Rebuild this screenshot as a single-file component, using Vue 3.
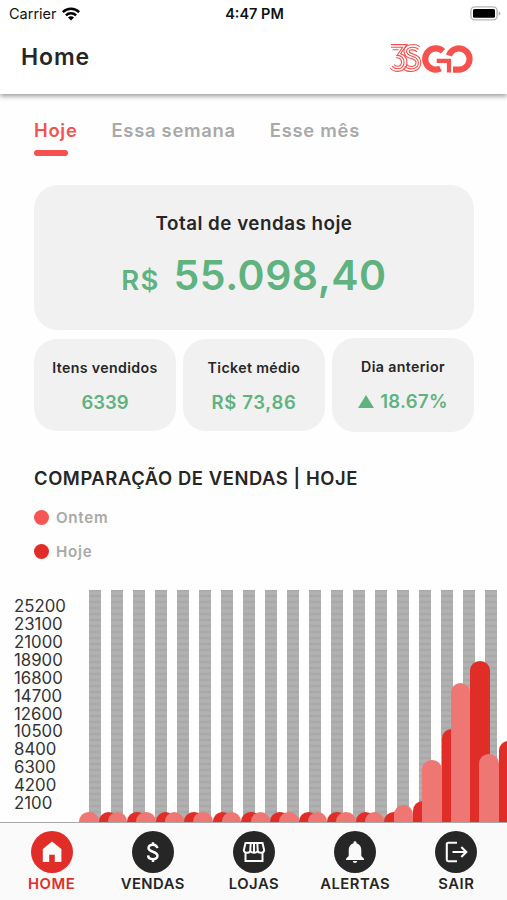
<template>
    <div class="screen">
        <header class="header">
            <div class="status">
                <div class="carrier">
                    <span>Carrier</span>
                    <svg width="18" height="14" viewBox="0 0 18 14" fill="none" stroke="#000" stroke-width="2.5">
                        <path d="M0.9 5.2a11.4 11.4 0 0 1 16.2 0" />
                        <path d="M3.9 8.4a7.2 7.2 0 0 1 10.2 0" />
                        <path d="M9 13.6L6 10.5a4.2 4.2 0 0 1 6 0z" fill="#000" stroke="none" />
                    </svg>
                </div>
                <div class="clock">4:47 PM</div>
                <svg class="battery" width="31" height="15" viewBox="0 0 31 15">
                    <rect x="0.9" y="0.9" width="26.2" height="13" rx="4" fill="#fff" stroke="#b5b5b5" stroke-width="1.4" />
                    <rect x="3" y="3" width="22" height="8.8" rx="1.6" fill="#000" />
                    <path d="M28.6 5.2q1.9 .7 1.9 2.2t-1.9 2.2z" fill="#b5b5b5" />
                </svg>
            </div>
            <div class="title-bar">
                <h1>Home</h1>
                <svg class="logo" width="84" height="32" viewBox="0 0 84 32" fill="none" stroke="#f4514f">
                    <g stroke-width="1.1">
                        <path d="M2 2.6H18L11.6 11.6C21 14 20 29.4 9 29.4C5.5 29.4 3 28.2 1.2 26" />
                        <path d="M2 5.2H13.6L8 13.4C17.5 13 17 26.8 9 26.8C6.5 26.8 4.5 26 3 24.2" />
                        <path d="M3.6 7.8H9.6M7 15.8C14 15 14 24.3 9 24.3C7.5 24.3 6 23.6 5 22.6" />
                        <path d="M31 4.6C25 .8 14.4 2.6 15 9.4C15.5 19 27 14.5 27 20.6C27 25.8 19.5 25.2 17.5 22.4" />
                        <path d="M29.6 7.2C25.5 4.2 17.5 4.8 17.6 9.2C17.9 16 29.4 12.6 29.4 20.8C29.2 28.2 20 28 15.5 24.4" />
                        <path d="M28 9.8C25.5 7.4 20 7.2 20.2 9.4C20.4 13.2 32 10.8 31.8 21C31 31.2 18 31 14 26.6" />
                    </g>
                    <g stroke-width="6.2">
                        <path d="M54 9.2A10.6 10.6 0 1 0 51.5 26.5" />
                        <path d="M47.7 18.8H60V30.6" stroke-width="4.2" />
                        <path d="M59.9 13.6A10.6 10.6 0 1 1 69.8 27.6H64" />
                    </g>
                </svg>
            </div>
        </header>

        <nav class="tabs">
            <a v-for="tab in tabs" :key="tab" :class="{ active: tab === activeTab }" @click="activeTab = tab">{{ tab }}</a>
        </nav>

        <section class="total">
            <h2>Total de vendas hoje</h2>
            <div class="amount"><span class="currency">R$</span><span class="number">55.098,40</span></div>
        </section>

        <section class="cards">
            <div v-for="card in cards" :key="card.label" class="card" :class="{ raised: card.up }">
                <h3>{{ card.label }}</h3>
                <div class="value" :class="card.kind">
                    <svg v-if="card.up" width="16" height="13" viewBox="0 0 16 13"><path d="M8 0l8 13H0z" fill="#60b27f" /></svg>
                    <span>{{ card.value }}</span>
                </div>
            </div>
        </section>

        <section class="compare">
            <h2>COMPARAÇÃO DE VENDAS | HOJE</h2>
            <div class="legend"><i class="dot yesterday"></i>Ontem</div>
            <div class="legend"><i class="dot today"></i>Hoje</div>
        </section>

        <section class="chart">
            <div class="axis">
                <div v-for="n in axis" :key="n">{{ n }}</div>
            </div>
            <div class="plot">
                <div class="stripes">
                    <i v-for="n in 19" :key="n"></i>
                </div>
                <div class="bars">
                    <div v-for="(hour, i) in hours" :key="i" class="pair">
                        <i class="bar pink" :style="{ height: hour[0] + 'px' }"></i>
                        <i class="bar red" :style="{ height: hour[1] + 'px' }"></i>
                    </div>
                </div>
            </div>
        </section>

        <footer class="menu">
            <a v-for="item in menu" :key="item.label" :class="{ current: item.label === 'HOME' }">
                <span class="circle">
                    <svg v-if="item.icon === 'home'" width="26" height="26" viewBox="0 0 26 26">
                        <path d="M13 2.5L22.4 10V23H15.8V15.8H10.2V23H3.8V10z" fill="#fafafa" />
                    </svg>
                    <svg v-else-if="item.icon === 'money'" width="26" height="26" viewBox="0 0 26 26" fill="none" stroke="#fafafa" stroke-width="2.5">
                        <path d="M17.3 9.2C16.8 4.5 8.5 4.5 8.5 9C8.5 13.4 17.5 12 17.5 16.8C17.5 21.5 8.3 21.3 8.1 16.4M13 3.2V6.5M13 19.8V23" />
                    </svg>
                    <svg v-else-if="item.icon === 'store'" width="26" height="26" viewBox="0 0 26 26" fill="none" stroke="#fafafa" stroke-width="2">
                        <path d="M4.5 4H21.5L23.2 11.2Q22.8 14 20.2 13.8Q17.8 13.8 16.7 12.3Q15.3 13.8 13 13.8Q10.7 13.8 9.3 12.3Q8.2 13.8 5.8 13.8Q3.2 14 2.8 11.2zM4.5 13.5V22H21.5V13.5M9.7 4L9.2 12.3M13 4V13.5M16.3 4L16.8 12.3" />
                    </svg>
                    <svg v-else-if="item.icon === 'bell'" width="26" height="26" viewBox="0 0 26 26" fill="#fafafa">
                        <path d="M11.5 4.3V3.5Q11.5 2.2 13 2.2T14.5 3.5V4.3Q19.3 5.7 19.3 11.5V17L22 19.7V21H4V19.7L6.7 17V11.5Q6.7 5.7 11.5 4.3zM10.8 22H15.2Q15 24 13 24T10.8 22z" />
                    </svg>
                    <svg v-else width="26" height="26" viewBox="0 0 26 26" fill="none" stroke="#fafafa" stroke-width="2.1">
                        <path d="M14 3.8H5.2Q3.8 3.8 3.8 5.2V20.8Q3.8 22.2 5.2 22.2H14M9.5 13H23M18.3 8L23.3 13L18.3 18" />
                    </svg>
                </span>
                <span class="name">{{ item.label }}</span>
            </a>
        </footer>
    </div>
</template>

<script setup>
import { ref } from 'vue'

const tabs = ['Hoje', 'Essa semana', 'Esse mês']
const activeTab = ref('Hoje')

const cards = [
    { label: 'Itens vendidos', value: '6339', kind: 'count' },
    { label: 'Ticket médio', value: 'R$ 73,86', kind: 'money' },
    { label: 'Dia anterior', value: '18.67%', kind: 'percent', up: true },
]

// 25200 down to 2100
const axis = Array.from({ length: 12 }, (_, i) => 2100 * (12 - i))

// bar heights: [ontem, hoje]
const hours = [
    ...Array.from({ length: 11 }, () => [10, 10]),
    [17, 21],
    [62, 93],
    [139, 161],
    [68, 81],
]

const menu = [
    { label: 'HOME', icon: 'home' },
    { label: 'VENDAS', icon: 'money' },
    { label: 'LOJAS', icon: 'store' },
    { label: 'ALERTAS', icon: 'bell' },
    { label: 'SAIR', icon: 'exit' },
]
</script>

<style>
body {
    margin: 0;
    background: #fff;
}
</style>

<style scoped>
.screen {
    width: 507px;
    height: 900px;
    overflow: hidden;
    display: flex;
    flex-direction: column;
    background: #fefefe;
    color: #262626;
    font-family: Inter, sans-serif;
}

h1,
h2,
h3 {
    margin: 0;
    font-weight: 600;
}

i {
    display: block;
    flex: none;
}

.header {
    height: 94px;
    flex: none;
    background: #fff;
    box-shadow: 0 2px 5px rgba(0, 0, 0, 0.42);
}

.status {
    height: 27px;
    padding: 0 6px 0 9px;
    display: grid;
    grid-template-columns: 1fr auto 1fr;
    align-items: center;
    color: #111;
    font-size: 14.5px;
}

.carrier {
    display: flex;
    align-items: center;
    gap: 5px;
}

.clock {
    font-weight: 600;
    margin-right: 1px;
}

.battery {
    justify-self: end;
}

.title-bar {
    height: 62px;
    padding: 0 34px 0 21px;
    display: flex;
    align-items: center;
    justify-content: space-between;
}

.title-bar h1 {
    margin-top: -2px;
    font-size: 23px;
    letter-spacing: 0.9px;
}

.tabs {
    height: 91px;
    flex: none;
    box-sizing: border-box;
    padding: 24px 34px 0;
    display: flex;
    gap: 34px;
    font-size: 18.4px;
    font-weight: 600;
    line-height: 25px;
    letter-spacing: 0.72px;
    color: #a9a9a9;
}

.tabs .active {
    color: #f4514f;
}

.tabs .active::after {
    content: '';
    display: block;
    width: 34px;
    height: 6px;
    margin-top: 7px;
    border-radius: 3px;
    background: #f4514f;
}

.total {
    height: 145px;
    flex: none;
    margin: 0 33px 0 34px;
    border-radius: 24px;
    background: #f1f1f1;
    text-align: center;
}

.total h2 {
    padding-top: 26px;
    font-size: 18.8px;
    line-height: 26px;
    letter-spacing: 0.5px;
}

.amount {
    display: flex;
    justify-content: center;
    align-items: baseline;
    gap: 14px;
    color: #60b27f;
    font-weight: 600;
    line-height: 50px;
    margin-top: 13px;
}

.currency {
    font-size: 27.5px;
    letter-spacing: 1.2px;
}

.number {
    font-size: 41px;
    letter-spacing: 0.5px;
}

.cards {
    margin: 8px 33px 0 34px;
    display: grid;
    grid-template-columns: repeat(3, 142px);
    justify-content: space-between;
    height: 94px;
    flex: none;
}

.card {
    margin: 1px 0;
    padding-top: 19px;
    border-radius: 23px;
    background: #f1f1f1;
    text-align: center;
}

.card.raised {
    margin: 0;
}

.card h3 {
    font-size: 14.2px;
    line-height: 20px;
    letter-spacing: 0.36px;
}

.value {
    display: flex;
    justify-content: center;
    align-items: center;
    gap: 6px;
    margin-top: 12px;
    color: #60b27f;
    font-size: 18.5px;
    font-weight: 600;
    line-height: 24px;
}

.money {
    letter-spacing: 0.65px;
}

.percent {
    letter-spacing: 0.3px;
}

.compare {
    padding: 32px 34px 0;
    height: 126px;
    flex: none;
}

.compare h2 {
    font-size: 18.4px;
    line-height: 28px;
    letter-spacing: 0.58px;
}

.legend {
    display: flex;
    align-items: center;
    gap: 7px;
    height: 34px;
    color: #a9a9a9;
    font-size: 15.2px;
    font-weight: 600;
    letter-spacing: 0.7px;
}

.compare h2 + .legend {
    margin-top: 8px;
}

.dot {
    width: 15px;
    height: 15px;
    border-radius: 50%;
}

.yesterday {
    background: #f55653;
}

.today {
    background: #e02d28;
}

.chart {
    height: 232px;
    flex: none;
    display: flex;
}

.axis {
    width: 65px;
    flex: none;
    padding: 8px 0 0 14px;
    color: #333;
    font-size: 16.8px;
    line-height: 17.92px;
}

.plot {
    display: grid;
    width: 428px;
    flex: none;
}

.stripes,
.bars {
    grid-area: 1 / 1;
    display: flex;
    min-width: 0;
}

.stripes {
    gap: 10px;
    padding-left: 10px;
}

.stripes i {
    width: 12px;
    background: repeating-linear-gradient(#a6a6a6 0, #b2b2b2 2px, #b2b2b2 4px, #a6a6a6 6px);
}

.pair {
    width: 28.6px;
    flex: none;
    display: flex;
    align-items: flex-end;
}

.bar {
    width: 19.5px;
    border-radius: 9.75px 9.75px 0 0;
}

.pink {
    background: #ef7773;
}

.red {
    background: #e02d28;
}

.menu {
    flex: 1;
    box-sizing: border-box;
    border-top: 1px solid #a8a8a8;
    padding: 8px 0 0 1px;
    display: grid;
    grid-template-columns: repeat(5, 101.2px);
    background: #fafafa;
    z-index: 1;
}

.menu a {
    display: flex;
    flex-direction: column;
    align-items: center;
}

.circle {
    width: 42px;
    height: 42px;
    border-radius: 50%;
    display: grid;
    place-items: center;
    background: #262626;
}

.name {
    font-size: 14.8px;
    font-weight: 600;
    line-height: 20px;
    margin-top: 1px;
    letter-spacing: 0.5px;
}

.current {
    color: #e02d28;
}

.current .circle {
    background: #e02d28;
}
</style>
